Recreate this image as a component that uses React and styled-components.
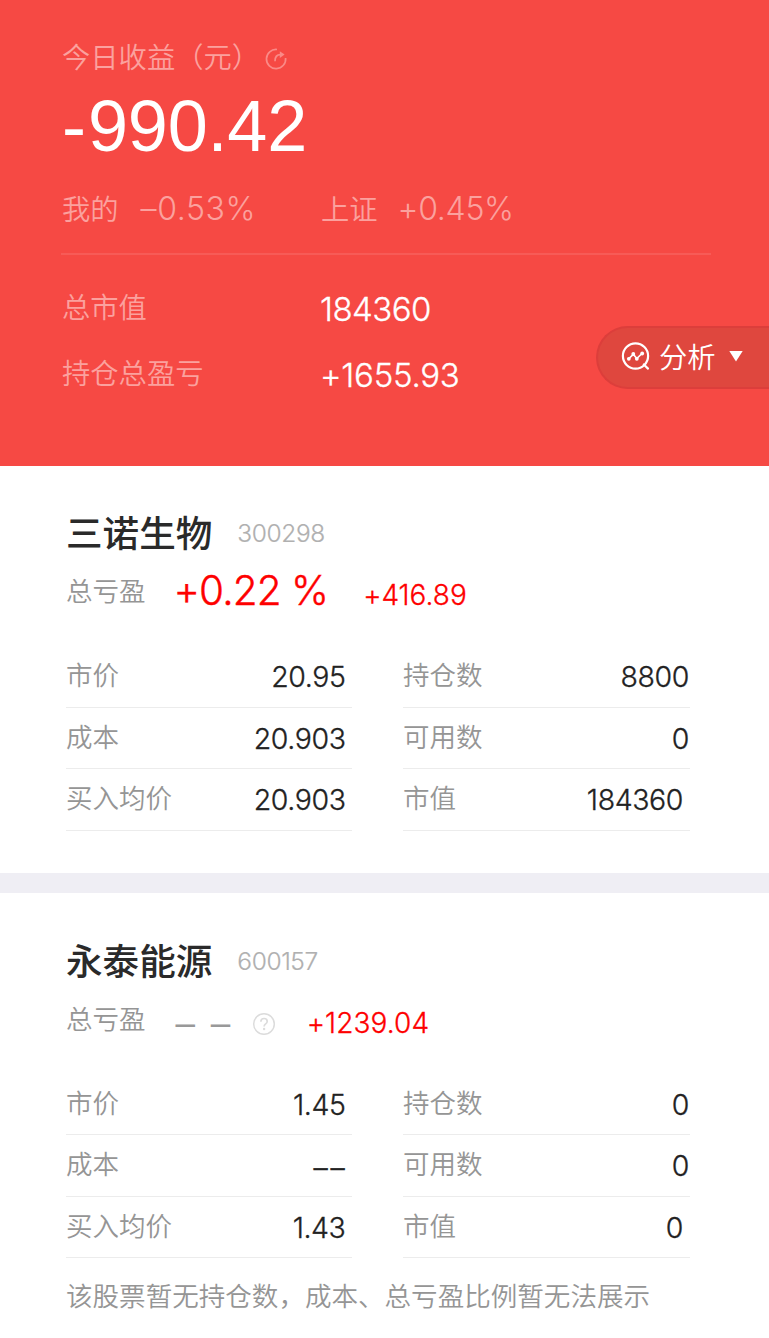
import React from "react";
import styled, { createGlobalStyle } from "styled-components";

const Global = createGlobalStyle`
  * { box-sizing: border-box; }
  body { margin: 0; background: #fff; font-family: "Noto Sans CJK SC", sans-serif; }
`;

const Page = styled.main`
  width: 769px;
  height: 1338px;
  overflow: hidden;
  background: #fff;
`;

const Label = styled.span`
  font-family: "Noto Sans CJK SC", sans-serif;
  font-weight: ${(p) => p.$weight || 350};
  font-size: ${(p) => p.$size || 28.3}px;
  line-height: 40px;
  padding-bottom: ${(p) => p.$lift || 0}px;
  white-space: nowrap;
  color: ${(p) => p.$color || "#959595"};
`;

const Num = styled.span`
  font-family: Inter, sans-serif;
  font-feature-settings: "calt" 0;
  font-weight: ${(p) => p.$weight || 350};
  font-size: ${(p) => p.$size}px;
  letter-spacing: ${(p) => p.$track || 0}px;
  -webkit-text-stroke: ${(p) => p.$stroke || 0}px currentColor;
  line-height: 40px;
  white-space: pre;
  color: ${(p) => p.$color};
  margin-top: ${(p) => p.$drop || 0}px;
  margin-left: ${(p) => p.$gap || 0}px;
  margin-right: ${(p) => p.$inset || 0}px;
`;

const Header = styled.header`
  height: 466px;
  padding: 36px 0 0 62px;
  background: #f64944;
`;

const TitleRow = styled.div`
  display: flex;
  height: 40px;
`;

const Today = styled.div`
  height: 80px;
  margin-top: 10px;
  font: 72px/80px "Liberation Sans", sans-serif;
  letter-spacing: -0.2px;
  color: #fff;
`;

const Sign = styled.span`
  letter-spacing: 2px;
`;

const Compare = styled.div`
  display: grid;
  grid-template-columns: 259px auto;
  height: 67px;
  width: 650px;
  margin: 22px 0 0 -1px;
  padding-left: 1px;
  border-bottom: 2px solid #f75b57;
`;

const Pair = styled.div`
  display: flex;
  align-items: flex-start;
`;

const Lower = styled.div`
  display: flex;
  justify-content: space-between;
  padding-top: 31px;
`;

const Totals = styled.div`
  display: grid;
  grid-template-columns: 258px auto;
  grid-auto-rows: 66px;
`;

const Analysis = styled.button`
  display: flex;
  align-items: center;
  width: 173px;
  height: 63px;
  margin: 40px 0 0;
  padding: 0 0 2px 23px;
  border: 2px solid #dc3e3b;
  border-right: 0;
  border-radius: 32px 0 0 32px;
  background: #df473e;
`;

const Stock = styled.section`
  height: ${(p) => p.$height}px;
  padding: ${(p) => (p.$last ? 46.5 : 46)}px 0 0 66px;
  border-bottom: ${(p) => (p.$last ? 0 : 20)}px solid #efeef4;
`;

const NameRow = styled.div`
  display: flex;
  height: 58px;
`;

const GainRow = styled.div`
  display: flex;
  align-items: flex-start;
  height: 76px;
`;

const Columns = styled.div`
  display: grid;
  grid-template-columns: 286px 287px;
  column-gap: 51px;
  grid-auto-rows: 61.5px;
`;

const Cell = styled.div`
  display: flex;
  align-items: flex-start;
  justify-content: space-between;
  padding-top: 8px;
  border-bottom: 1px solid #ececec;
`;

const Note = styled.p`
  margin: 17px 0 0;
  height: 40px;
`;

const Icon = styled.svg`
  flex: none;
  display: block;
  margin: ${(p) => p.$margin};
`;

const soft = "#fba19e";

function ShareIcon() {
  return (
    <Icon width="22" height="22" viewBox="0 0 22 22" $margin="12px 0 0 5px" fill="none" stroke="#fa8a87" strokeWidth="1.7">
      <path d="M12 1.500A9.600 9.600 0 1 0 20.600 10" />
      <path d="M10 13.200c0-4.200 1.800-6.500 5.500-6.500" />
      <path d="M14.800 3.200L19.600 6.600L14.800 10z" fill="#fa8a87" stroke="none" />
    </Icon>
  );
}

function ChartIcon() {
  return (
    <Icon width="30" height="30" viewBox="0 0 30 30" $margin="0 8px 0 0" fill="none" stroke="#fff" strokeWidth="2.200" strokeLinecap="round">
      <circle cx="14.500" cy="14" r="12.600" />
      <path d="M22.800 22.500L27 26.600" />
      <path d="M8 16.500L12.300 12.300L15.800 16.500L21 11.500" strokeWidth="1.700" strokeLinejoin="round" />
      <g fill="#fff" stroke="none">
        <circle cx="7.800" cy="16.800" r="1.900" />
        <circle cx="12.300" cy="12" r="1.900" />
        <circle cx="15.800" cy="16.800" r="1.900" />
        <circle cx="21.200" cy="11.500" r="1.900" />
      </g>
    </Icon>
  );
}

function HelpIcon() {
  return (
    <Icon width="24" height="24" viewBox="0 0 24 24" $margin="14px 0 0 19px" fill="none" stroke="#dcdcdc" strokeWidth="1.500">
      <circle cx="12" cy="12" r="10.300" />
      <path d="M8.900 9.700c0-2 1.300-3.200 3.200-3.200s3.100 1.200 3.100 2.900c0 2.500-3.100 2.500-3.100 5" strokeWidth="1.700" />
      <circle cx="12.100" cy="17" r="1.200" fill="#dcdcdc" stroke="none" />
    </Icon>
  );
}

function Grid({ cells }) {
  return (
    <Columns>
      {cells.map(([label, value, inset]) => {
        const empty = value === "––";
        return (
          <Cell key={label}>
            <Label $size={26.5}>{label}</Label>
            <Num
              $size={28.5}
              $color="#222"
              $stroke={0.3}
              $drop={empty ? 4.5 : 3}
              $inset={inset}
              $track={empty ? 2.8 : -0.4}
            >
              {value}
            </Num>
          </Cell>
        );
      })}
    </Columns>
  );
}

export default function App() {
  return (
    <Page>
      <Global />
      <Header>
        <TitleRow>
          <Label $color={soft}>今日收益（元）</Label>
          <ShareIcon />
        </TitleRow>
        <Today><Sign>-</Sign>990.42</Today>
        <Compare>
          <Pair>
            <Label $color={soft}>我的</Label>
            <Num $size={32} $color={soft} $gap={22} $drop={0.5} $track={0.6}>–0.53%</Num>
          </Pair>
          <Pair>
            <Label $color={soft}>上证</Label>
            <Num $size={32} $color={soft} $gap={20} $drop={0.5} $track={-0.3}>+0.45%</Num>
          </Pair>
        </Compare>
        <Lower>
          <Totals>
            <Label $color={soft}>总市值</Label>
            <Num $size={33} $color="#fff" $stroke={0.3} $drop={3} $track={-0.55}>184360</Num>
            <Label $color={soft}>持仓总盈亏</Label>
            <Num $size={33} $color="#fff" $stroke={0.3} $drop={3} $track={-0.25}>+1655.93</Num>
          </Totals>
          <Analysis>
            <ChartIcon />
            <Label $color="#fff" $lift={2}>分析</Label>
            <Icon width="14" height="11" viewBox="0 0 14 11" $margin="0 0 0 13px">
              <path d="M.3 0H13.700L7 10.500z" fill="#fff" />
            </Icon>
          </Analysis>
        </Lower>
      </Header>

      <Stock $height={427}>
        <NameRow>
          <Label $size={36.6} $weight={500} $color="#2a2a2a">三诺生物</Label>
          <Num $size={24.5} $weight={300} $color="#b0b0b0" $gap={25} $drop={1} $stroke={0.2} $track={-0.4}>300298</Num>
        </NameRow>
        <GainRow>
          <Label $size={26.5}>总亏盈</Label>
          <Num $size={40.5} $color="#fe0000" $gap={28} $drop={1} $stroke={0.4} $track={-0.9}>+0.22 %</Num>
          <Num $size={28} $color="#fe0000" $gap={35} $drop={5} $stroke={0.3}>+416.89</Num>
        </GainRow>
        <Grid
          cells={[
            ["市价", "20.95", 6.5],
            ["持仓数", "8800", 1],
            ["成本", "20.903", 6.5],
            ["可用数", "0", 1],
            ["买入均价", "20.903", 6.5],
            ["市值", "184360", 7],
          ]}
        />
      </Stock>

      <Stock $height={445} $last>
        <NameRow>
          <Label $size={36.6} $weight={500} $color="#2a2a2a">永泰能源</Label>
          <Num $size={24.5} $weight={300} $color="#b0b0b0" $gap={25} $drop={1} $stroke={0.2} $track={-0.4}>600157</Num>
        </NameRow>
        <GainRow>
          <Label $size={26.5}>总亏盈</Label>
          <Num $size={39} $color="#999" $gap={30} $drop={6.5} $track={2.4}>– –</Num>
          <HelpIcon />
          <Num $size={28} $color="#fe0000" $gap={31} $drop={5} $stroke={0.3} $track={0.1}>+1239.04</Num>
        </GainRow>
        <Grid
          cells={[
            ["市价", "1.45", 6.5],
            ["持仓数", "0", 1],
            ["成本", "––", 4.5],
            ["可用数", "0", 1],
            ["买入均价", "1.43", 6.5],
            ["市值", "0", 7],
          ]}
        />
        <Note>
          <Label $size={26.55}>该股票暂无持仓数，成本、总亏盈比例暂无法展示</Label>
        </Note>
      </Stock>
    </Page>
  );
}
